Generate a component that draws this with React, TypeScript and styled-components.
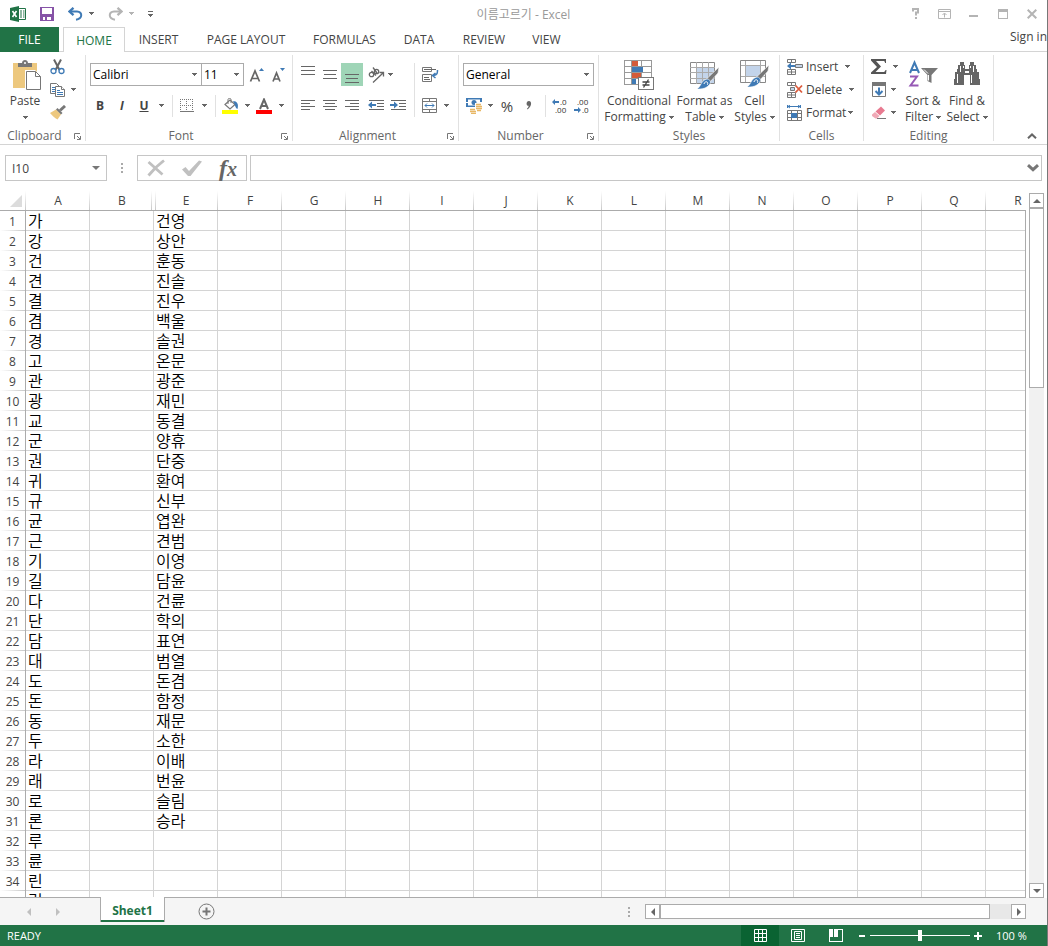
import React from "react";
import styled, { createGlobalStyle, css } from "styled-components";

const Global = createGlobalStyle`
  * { box-sizing: border-box; }
  html, body { margin: 0; }
  body, button, input, select {
    font-family: "Open Sans", "Noto Sans CJK KR", sans-serif;
    font-size: 12px;
    color: #444;
  }
  button { border: 0; padding: 0; background: none; }
  svg { display: block; flex: none; }
`;

const GREEN = "#217346";
const LINE = "#d4d4d4";
const EDGE = "#ababab";

const Window = styled.div`
  height: 100vh;
  display: flex;
  flex-direction: column;
  background: #fff;
  border-right: 1px solid #777;
  overflow: hidden;
`;

/* ---------- title bar ---------- */

const TitleBar = styled.header`
  flex: none;
  height: 27px;
  display: grid;
  grid-template-columns: 1fr auto 1fr;
  align-items: center;
`;

const QuickAccess = styled.div`
  display: flex;
  align-items: center;
  padding-left: 10px;
  gap: 14px;
`;

const QuickButton = styled.button`
  display: flex;
  align-items: center;
  gap: 6px;
`;

const Title = styled.h1`
  margin: 0;
  font-size: 12px;
  font-weight: 400;
  color: #999;
`;

const WindowControls = styled.div`
  display: flex;
  justify-content: flex-end;
  padding-right: 1px;
`;

const WindowButton = styled.button`
  width: 29px;
  height: 24px;
  display: grid;
  place-items: center;
`;

/* ---------- tabs ---------- */

const TabRow = styled.nav`
  flex: none;
  height: 25px;
  display: flex;
  border-bottom: 1px solid ${LINE};
  color: #444;
`;

const Tab = styled.button<{ $width: number; $kind?: "file" | "active" }>`
  width: ${(p) => p.$width}px;
  height: 25px;
  text-align: center;
  white-space: nowrap;
  ${(p) =>
    p.$kind === "file" &&
    css`
      background: ${GREEN};
      color: #fff;
      margin-right: 4px;
    `}
  ${(p) =>
    p.$kind === "active" &&
    css`
      background: #fff;
      color: ${GREEN};
      border: 1px solid ${LINE};
      border-bottom: 0;
    `}
`;

const SignIn = styled.a`
  margin-left: auto;
  line-height: 20px;
  color: #444;
  text-decoration: none;
`;

/* ---------- ribbon ---------- */

const Ribbon = styled.section`
  flex: none;
  height: 93px;
  display: flex;
  padding-top: 3px;
  border-bottom: 1px solid ${LINE};
`;

const Group = styled.div<{ $width: number }>`
  width: ${(p) => p.$width}px;
  height: 86px;
  flex: none;
  display: flex;
  flex-direction: column;
  border-right: 1px solid #e1e1e1;
`;

const GroupBody = styled.div<{ $inset?: number }>`
  flex: none;
  height: 73px;
  display: flex;
  padding-left: ${(p) => p.$inset ?? 0}px;
`;

const GroupFoot = styled.div`
  display: flex;
  height: 13px;
  line-height: 16px;
  color: #666;
`;

const GroupName = styled.span`
  flex: 1;
  text-align: center;
`;

const Launcher = styled.button`
  width: 16px;
  padding: 5px 0 0 5px;
  align-self: flex-start;
`;

const ToolColumn = styled.div<{ $width?: number; $divided?: boolean; $inset?: number }>`
  width: ${(p) => (p.$width ? p.$width + "px" : "auto")};
  padding-left: ${(p) => p.$inset ?? 0}px;
  margin: 8px 0 11px;
  display: flex;
  flex-direction: column;
  gap: 8px;
  ${(p) => p.$divided && `border-right: 1px solid #e1e1e1;`}
`;

const ToolRow = styled.div`
  display: flex;
  align-items: center;
  height: 23px;
`;

const Tool = styled.button<{ $on?: boolean }>`
  width: 22px;
  height: 23px;
  display: grid;
  place-items: center;
  background: ${(p) => (p.$on ? "#9fd5b7" : "transparent")};
`;

const Letter = styled(Tool)<{ $look: "bold" | "italic" | "underline" | "plain" }>`
  font-size: 12px;
  font-weight: ${(p) => (p.$look === "plain" ? 400 : 700)};
  font-style: ${(p) => (p.$look === "italic" ? "italic" : "normal")};
  text-decoration: ${(p) => (p.$look === "underline" ? "underline" : "none")};
`;

const Percent = styled(Letter)`
  font-size: 15px;
`;

const CaretTool = styled.button`
  width: 12px;
  height: 23px;
  display: grid;
  place-items: center;
`;

const DropTool = styled.button<{ $gap?: number; $lead?: number }>`
  height: 23px;
  display: flex;
  align-items: center;
  gap: ${(p) => p.$gap ?? 5}px;
  padding: 0 3px 0 ${(p) => p.$lead ?? 5}px;
`;

const Rule = styled.span`
  width: 1px;
  height: 22px;
  margin: 0 3px 0 5px;
  background: #e1e1e1;
`;

const Pickers = styled.div`
  display: flex;
  padding-left: 1px;
`;

const Picker = styled.label<{ $width: number }>`
  width: ${(p) => p.$width}px;
  height: 23px;
  display: flex;
  align-items: center;
  border: 1px solid ${EDGE};
  & + & { margin-left: -1px; }
  select {
    flex: 1;
    min-width: 0;
    height: 21px;
    appearance: none;
    border: 0;
    padding: 0 2px;
    background: transparent;
    color: #000;
  }
  svg { margin-right: 4px; }
`;

const Big = styled.button<{ $width: number }>`
  width: ${(p) => p.$width}px;
  height: 73px;
  flex: none;
  padding-top: 5px;
  display: flex;
  flex-direction: column;
  align-items: center;
  line-height: 16px;
  white-space: nowrap;
  > svg { margin-bottom: 3px; }
`;

const BigLine = styled.span`
  height: 16px;
  display: flex;
  align-items: center;
  gap: 3px;
`;

const SmallStack = styled.div<{ $width?: number }>`
  width: ${(p) => (p.$width ? p.$width + "px" : "auto")};
  display: flex;
  flex-direction: column;
`;

const Small = styled.button<{ $gap?: number }>`
  height: 23px;
  display: flex;
  align-items: center;
  gap: ${(p) => p.$gap ?? 7}px;
`;

const SmallText = styled.span`
  display: flex;
  align-items: center;
  gap: 3px;
`;

const Collapse = styled.button`
  margin-left: auto;
  align-self: flex-end;
  padding: 0 10px 5px 0;
`;

/* ---------- formula bar ---------- */

const FormulaBar = styled.div`
  flex: none;
  display: flex;
  align-items: center;
  padding: 10px 5px 10px;
`;

const Box = styled.div<{ $width?: number }>`
  ${(p) => (p.$width ? `width: ${p.$width}px;` : "flex: 1;")}
  height: 26px;
  display: flex;
  align-items: center;
  border: 1px solid #c6c6c6;
  input {
    flex: 1;
    min-width: 0;
    border: 0;
    outline: 0;
    padding: 0 6px;
    height: 24px;
  }
`;

const Handle = styled.span`
  width: 30px;
  display: grid;
  place-items: center;
`;

const EntryButtons = styled(Box)`
  justify-content: space-between;
  padding: 0 9px;
  margin-right: 3px;
`;

const BoxButton = styled.button<{ $right: number }>`
  padding-right: ${(p) => p.$right}px;
`;

/* ---------- sheet ---------- */

const SheetArea = styled.main`
  flex: 1;
  min-height: 0;
  display: flex;
`;

const SheetView = styled.div`
  position: relative;
  flex: 1;
  min-width: 0;
  overflow: hidden;
  border-bottom: 1px solid ${EDGE};
  &::after {
    content: "";
    position: absolute;
    top: 19px;
    right: 0;
    bottom: 0;
    width: 1px;
    background: ${EDGE};
  }
`;

const Sheet = styled.table`
  width: 1050px;
  table-layout: fixed;
  border-collapse: separate;
  border-spacing: 0;
`;

const fade = "linear-gradient(#fff, #c8c8c8)";

const ColumnHead = styled.th<{ $edge?: "hiddenAfter" | "hiddenBefore" }>`
  height: 20px;
  padding: 0;
  font-size: 12px;
  line-height: 18px;
  font-weight: 400;
  border-bottom: 1px solid ${EDGE};
  background-repeat: no-repeat;
  background-image: ${(p) => (p.$edge === "hiddenBefore" ? `${fade}, ${fade}` : fade)};
  background-size: 1px 100%;
  background-position: ${(p) =>
    p.$edge === "hiddenAfter"
      ? "right 2px top"
      : p.$edge === "hiddenBefore"
        ? "right top, left 1px top"
        : "right top"};
`;

const Corner = styled(ColumnHead)`
  svg { margin-left: 10px; }
`;

const RowHead = styled.th`
  height: 20px;
  padding: 0;
  font-size: 12px;
  line-height: 19px;
  font-weight: 400;
  text-align: center;
  border-right: 1px solid ${EDGE};
  background: linear-gradient(90deg, #fff, #c8c8c8) left bottom / 100% 1px no-repeat;
`;

const Cell = styled.td`
  height: 20px;
  padding: 0 0 0 2px;
  border-right: 1px solid ${LINE};
  border-bottom: 1px solid ${LINE};
  font-family: "Noto Sans CJK KR", sans-serif;
  font-size: 16px;
  font-weight: 350;
  line-height: 19px;
  color: #000;
  white-space: nowrap;
`;

const VerticalBar = styled.div`
  width: 21px;
  padding: 2px 3px 0;
  display: flex;
  flex-direction: column;
`;

const Arrow = styled.button`
  flex: none;
  width: 15px;
  height: 15px;
  display: grid;
  place-items: center;
  background: #fff;
  border: 1px solid ${EDGE};
`;

const VerticalTrack = styled.div`
  flex: 1;
  background: #f1f1f1;
`;

const VerticalThumb = styled.div`
  height: 180px;
  background: #fff;
  border: 1px solid ${EDGE};
`;

/* ---------- sheet tabs ---------- */

const SheetTabs = styled.div`
  flex: none;
  height: 27px;
  display: flex;
  align-items: center;
  background: #f5f5f5;
`;

const TabArrows = styled.div`
  width: 100px;
  display: flex;
  gap: 21px;
  padding-left: 25px;
`;

const SheetTab = styled.button`
  position: relative;
  align-self: flex-start;
  width: 65px;
  height: 25px;
  margin-top: -1px;
  padding-top: 2px;
  background: #fff;
  border: solid ${EDGE};
  border-width: 0 1px;
  box-shadow: inset 0 -2px ${GREEN};
  color: ${GREEN};
  font-weight: 700;
`;

const AddSheet = styled.button`
  margin-left: 33px;
`;

const SheetScroll = styled.div`
  margin-left: auto;
  width: 398px;
  flex: none;
  display: flex;
  align-items: center;
  margin-right: 21px;
`;

const Grip = styled.span`
  width: 17px;
`;

const HorizontalTrack = styled.div`
  flex: 1;
  background: #e8e8e8;
`;

const HorizontalThumb = styled.div`
  width: 330px;
  height: 15px;
  background: #fff;
  border: 1px solid ${EDGE};
`;

/* ---------- status bar ---------- */

const StatusBar = styled.footer`
  flex: none;
  height: 21px;
  display: flex;
  align-items: center;
  padding-left: 7px;
  background: ${GREEN};
  color: #fff;
  font-size: 11px;
`;

const ViewButtons = styled.div`
  margin-left: auto;
  display: flex;
`;

const ViewButton = styled.button<{ $on?: boolean }>`
  width: 38px;
  height: 21px;
  display: grid;
  place-items: center;
  background: ${(p) => (p.$on ? "#0a6332" : "transparent")};
`;

const ZoomButton = styled.button`
  width: 14px;
  height: 21px;
  display: grid;
  place-items: center;
`;

const ZoomSlider = styled.input`
  width: 100px;
  height: 21px;
  margin: 0 1px;
  appearance: none;
  background: linear-gradient(#fff, #fff) center / 100% 1px no-repeat;
  &::-webkit-slider-thumb {
    appearance: none;
    width: 4px;
    height: 11px;
    background: #fff;
  }
`;

const ZoomValue = styled.span`
  width: 62px;
  padding-left: 11px;
`;

/* ---------- icons ---------- */

const Caret = ({ color = "#666" }: { color?: string }) => (
  <svg width="5" height="3" viewBox="0 0 5 3" fill={color} shapeRendering="crispEdges">
    <path d="M0 0h5v1H0zM1 1h3v1H1zM2 2h1v1H2z" />
  </svg>
);

const Triangle = ({ dir, color = "#666" }: { dir: "up" | "down" | "left" | "right"; color?: string }) => {
  const d = {
    up: "M0 6L4 2L8 6z",
    down: "M0 2L4 6L8 2z",
    left: "M6 0L2 4L6 8z",
    right: "M2 0L6 4L2 8z",
  }[dir];
  return (
    <svg width="8" height="8" viewBox="0 0 8 8" fill={color}>
      <path d={d} />
    </svg>
  );
};

const ExcelLogo = () => (
  <svg width="16" height="16" viewBox="0 0 16 16">
    <path d="M9 2.500h6.500v11H9" fill="#fff" stroke={GREEN} />
    <path d="M10 5h2M13 5h1.500M10 7h2M13 7h1.500M10 9h2M13 9h1.500M10 11h2M13 11h1.500" stroke={GREEN} />
    <path d="M0 2L9 0v16L0 14z" fill={GREEN} />
    <path d="M2.500 5L6.500 11M6.500 5L2.500 11" stroke="#fff" strokeWidth="1.600" />
  </svg>
);

const SaveIcon = () => (
  <svg width="14" height="14" viewBox="0 0 14 14" fill="#8653a7" shapeRendering="crispEdges">
    <path fillRule="evenodd" d="M0 0h14v14H0zM2 1v6h10V1zM3 10v3h2v-3zM7 10v3h4v-3z" />
  </svg>
);

const UndoIcon = ({ color, flip }: { color: string; flip?: boolean }) => (
  <svg width="15" height="14" viewBox="0 0 15 14" fill="none" stroke={color} strokeWidth="2">
    <g transform={flip ? "matrix(-1 0 0 1 15 0)" : undefined}>
      <path d="M5.500 0.800L1.500 4.500L5.500 8.200" strokeWidth="2.300" />
      <path d="M2 4.500H9C12 4.500 13.500 6.500 13.200 8.700C12.900 11 11 12.300 8 12.800" />
    </g>
  </svg>
);

const CustomizeIcon = () => (
  <svg width="5" height="6" viewBox="0 0 5 6" fill="#666" shapeRendering="crispEdges">
    <path d="M0 0h5v1H0zM0 3h5v1H0zM1 4h3v1H1zM2 5h1v1H2z" />
  </svg>
);

const HelpIcon = () => (
  <svg width="8" height="11" viewBox="0 0 8 11" fill="none" stroke="#b4b4b4" strokeWidth="2">
    <path d="M1 3.500V1H6V4.500H4V7.500M3 10h2" />
  </svg>
);

const RibbonOptionsIcon = () => (
  <svg width="13" height="10" viewBox="0 0 13 10" fill="none" stroke="#b4b4b4">
    <path d="M.5 .5h12v9H.5zM.5 2.500h12M6.500 8.500v-4M4.500 6l2-2l2 2" />
  </svg>
);

const MinimizeIcon = () => (
  <svg width="9" height="10" viewBox="0 0 9 10" fill="#b4b4b4">
    <path d="M0 6h9v2H0z" />
  </svg>
);

const MaximizeIcon = () => (
  <svg width="10" height="10" viewBox="0 0 10 10" fill="#b4b4b4" fillRule="evenodd">
    <path d="M0 0h10v10H0zM1 3v6h8V3z" />
  </svg>
);

const CloseIcon = () => (
  <svg width="10" height="10" viewBox="0 0 10 10" stroke="#b4b4b4" strokeWidth="2">
    <path d="M.7 .7l8.600 8.600M9.300 .7L.7 9.300" />
  </svg>
);

const LauncherIcon = () => (
  <svg width="7" height="7" viewBox="0 0 7 7" fill="none" stroke="#777">
    <path d="M.5 6V.5H6M3 3l3 3M6.500 3v3.500H3" />
  </svg>
);

const PasteIcon = () => (
  <svg width="32" height="30" viewBox="-3 0 32 30">
    <path d="M1 3h24v25H1z" fill="#edc87e" />
    <path d="M6 3h4c0-4 6-4 6 0h4v4H6z" fill="#777" />
    <circle cx="13" cy="3" r="1" fill="#fff" />
    <path d="M13 10h10l6 6v14H13z" fill="#fff" />
    <path d="M14.500 11.500h9l5 5v13h-14zM23.500 11.500v5h5" fill="#fff" stroke="#777" />
  </svg>
);

const CutIcon = () => (
  <svg width="16" height="16" viewBox="0 0 16 16" fill="none">
    <path d="M4 0.500L9.500 11M11 0.500L5.500 11" stroke="#666" strokeWidth="2" />
    <circle cx="3.500" cy="12" r="2.500" stroke="#3f7ab5" strokeWidth="1.300" />
    <circle cx="11.500" cy="12" r="2.500" stroke="#3f7ab5" strokeWidth="1.300" />
  </svg>
);

const CopyIcon = () => (
  <svg width="16" height="16" viewBox="0 0 16 16" fill="#fff" stroke="#777">
    <path d="M.5 1.500h6l3 3v7h-9z" />
    <path d="M2 5.500h3M2 7.500h3M2 9.500h3" stroke="#3f7ab5" />
    <path d="M5.500 4.500h6l3 3v7h-9z" />
    <path d="M11.500 4.500v3h3" />
    <path d="M7 8.500h3M7 10.500h6M7 12.500h6" stroke="#3f7ab5" />
  </svg>
);

const BrushIcon = () => (
  <svg width="16" height="15" viewBox="0 0 16 15">
    <path d="M0 8L6 4.500L11 9.500L7.500 14.500C4.500 13 2.500 11 0 8z" fill="#edc87e" />
    <path d="M6 4.500L7.500 3L12.500 8L11 9.500z" fill="#777" />
    <path d="M10 5.500L15 1" stroke="#777" strokeWidth="3" />
  </svg>
);

const GrowFontIcon = ({ small }: { small?: boolean }) => (
  <svg width="16" height="16" viewBox="0 0 16 16">
    <path d={small ? "M2 14.500L5.500 6L9 14.500M3.500 12h4" : "M1.500 14.500L6 4L10.500 14.500M3 11.500h6"} fill="none" stroke="#666" strokeWidth="1.700" />
    <path d={small ? "M9 1h5l-2.500 3z" : "M10 4h5l-2.500-3z"} fill="#3f7ab5" />
  </svg>
);

const BordersIcon = () => (
  <svg width="14" height="14" viewBox="0 0 14 14" stroke="#777" shapeRendering="crispEdges">
    <path d="M0 .5h14M0 6.500h14M.5 0v12M6.500 0v12M12.500 0v12" strokeDasharray="1 1" />
    <path d="M0 12.500h14" />
  </svg>
);

const FillIcon = () => (
  <svg width="17" height="16" viewBox="0 0 17 16">
    <path d="M3 6.500L8 2L13 6.500L8 11z" fill="#fff" stroke="#777" strokeWidth="1.200" />
    <path d="M6 6V1.500C6 0 9 0 9 1.500V5" fill="none" stroke="#777" />
    <path d="M11 3C15 3 17 6 15.500 11C13 10 13.500 7 11 3z" fill="#3f7ab5" />
    <path d="M0 12h16v4H0z" fill="#ff0" />
  </svg>
);

const FontColorIcon = () => (
  <svg width="16" height="16" viewBox="0 0 16 16">
    <path d="M4 11L8 1.500L12 11M5.500 8h5" fill="none" stroke="#666" strokeWidth="2" />
    <path d="M0 12h16v4H0z" fill="#f00" />
  </svg>
);

const LinesIcon = ({ lines, top = 0 }: { lines: [number, number][]; top?: number }) => (
  <svg width="14" height="17" viewBox="0 0 14 17" fill="#666" shapeRendering="crispEdges">
    {lines.map(([x, w], i) => (
      <rect key={i} x={x} y={top + i * (lines.length === 3 ? 4 : 3)} width={w} height="1" />
    ))}
  </svg>
);

const OrientationIcon = () => (
  <svg width="17" height="16" viewBox="0 0 17 16" fill="none" stroke="#666" strokeWidth="1.300">
    <circle cx="3.500" cy="7.500" r="2.200" />
    <path d="M3.500 4L8 8.500" />
    <circle cx="8.500" cy="4.500" r="2.200" />
    <path d="M5 .5L9 6" />
    <path d="M5 15.500L15 6M11.500 5.500h4v4" />
  </svg>
);

const WrapIcon = () => (
  <svg width="17" height="16" viewBox="0 0 17 16" fill="none" stroke="#777">
    <path d="M.5 .5h9v4h-9zM.5 7.500h9v7h-9z" />
    <path d="M2 2.500h12M2 10.500h5M2 12.500h6" stroke="#666" />
    <path d="M15.500 3c0 3 0 5-4 5.500M13.500 6l-3 2.500l3 2.500" stroke="#3f7ab5" strokeWidth="1.500" />
  </svg>
);

const IndentIcon = ({ out }: { out?: boolean }) => (
  <svg width="16" height="11" viewBox="0 0 16 11">
    <path d="M1 .5h15M9 3.500h7M9 6.500h7M1 9.500h15" stroke="#666" shapeRendering="crispEdges" />
    <path d={out ? "M0 5L4 1.500V4h4v2H4v2.500z" : "M8 5L4 1.500V4H0v2h4v2.500z"} fill="#3f7ab5" />
  </svg>
);

const MergeIcon = () => (
  <svg width="15" height="15" viewBox="0 0 15 15" fill="none" stroke="#777">
    <path d="M.5 .5h14v14H.5zM.5 3.500h14M.5 11.500h14M7.500 0v4M7.500 12v3" />
    <path d="M3 7.500h9M5 5.500L3 7.500l2 2M10 5.500l2 2l-2 2" stroke="#3f7ab5" />
  </svg>
);

const CurrencyIcon = () => (
  <svg width="17" height="16" viewBox="0 0 17 16">
    <path d="M0 0h16v9H0z" fill="#3f7ab5" />
    <path d="M2 1.500h12v6H2z" fill="#fff" />
    <circle cx="8" cy="4.500" r="2.500" fill="#3f7ab5" />
    <path d="M0 4h2v1H0zM14 4h2v1h-2z" fill="#fff" />
    <path d="M9 5h7v10h-7zM4 10h7v6H4z" fill="#fff" />
    <path d="M10 6.500h5M10 8.500h6M10 10.500h6M11 12.500h4M4 11.500h5M4 13.500h6M5 15.300h5" stroke="#e8b765" strokeWidth="1.300" />
  </svg>
);

const CommaIcon = () => (
  <svg width="6" height="9" viewBox="0 0 6 9" fill="#666">
    <path d="M3 0C6 0 6 5 1.500 8.500L1 7.500C2.300 6.500 2.700 5.500 2.500 4.800C-.3 4.800 0 0 3 0z" />
  </svg>
);

const DecimalArt = styled.svg`
  font-family: "Open Sans", sans-serif;
  font-size: 8px;
  overflow: visible;
`;

const DecimalIcon = ({ more }: { more?: boolean }) => (
  <DecimalArt width="16" height="16" viewBox="0 0 16 16" fill="#333">
    <text x={more ? 8 : 3} y="7">{more ? ".0" : ".00"}</text>
    <text x={more ? 3 : 8} y="15">{more ? ".00" : ".0"}</text>
    <path
      d={more ? "M0 4L3 1V3h4v2H3v2z" : "M7 12L4 9V11H0v2h4v2z"}
      fill="#3f7ab5"
    />
  </DecimalArt>
);

const ConditionalIcon = () => (
  <svg width="30" height="30" viewBox="0 0 30 30" shapeRendering="crispEdges">
    <path d="M.5 .5h27v24H.5zM7.500 0v25M17.500 0v25M0 6.500h28M0 12.500h28M0 18.500h28" fill="#fff" stroke="#999" />
    <path d="M8 1h6v5H8zM8 13h9v5H8z" fill="#d35b3a" />
    <path d="M8 7h11v5H8zM8 19h4v5H8z" fill="#3f7ab5" />
    <path d="M14.500 17.500h15v12h-15z" fill="#fff" stroke="#777" />
    <g shapeRendering="auto" stroke="#444" strokeWidth="1.300">
      <path d="M18.500 22h7M18.500 25h7M24.500 19.500L19.500 27.500" />
    </g>
  </svg>
);

const Paintbrush = () => (
  <g>
    <path d="M29 5L28 11L20 20L16.500 17z" fill="#777" stroke="#fff" strokeWidth=".6" />
    <path d="M17 17C20 17 21.500 20 19.500 22.500C17 26 12 27.500 7 27C11 25 11 18 17 17z" fill="#3f7ab5" stroke="#fff" strokeWidth=".6" />
    <path d="M14 22c0-2 3-3 3.500-1.500s0 2-.5 2.500" stroke="#fff" fill="none" />
  </g>
);

const FormatTableIcon = () => (
  <svg width="30" height="30" viewBox="0 0 30 30">
    <path d="M.5 2.500h24v21H.5z" fill="#fff" stroke="#888" />
    <path d="M7 8h17v15H7z" fill="#c3d4ea" />
    <path d="M6.500 2v22M12.500 2v22M18.500 2v22M0 7.500h25M0 12.500h25M0 18.500h25" stroke="#aaa" />
    <g transform="translate(0 2)"><Paintbrush /></g>
  </svg>
);

const CellStylesIcon = () => (
  <svg width="30" height="30" viewBox="0 0 30 30">
    <path d="M.5 .5h25v22H.5z" fill="#fff" stroke="#888" />
    <path d="M5.500 1v21M20.500 1v21M1 5.500h24M1 16.500h24" stroke="#aaa" />
    <path d="M6 6h14v10H6z" fill="#c3d4ea" />
    <Paintbrush />
  </svg>
);

const InsertIcon = () => (
  <svg width="16" height="16" viewBox="0 0 16 16" fill="none" stroke="#777">
    <path d="M.5 .5h8v3h-8zM4.500 0v3M.5 10.500h8v5h-8zM4.500 10v6M.5 13h8" />
    <path d="M8.500 5.500h7v3h-7z" fill="#c3d4ea" />
    <path d="M0 7L4 3.500V6h4v2H4v2.500z" fill="#3f7ab5" stroke="none" />
  </svg>
);

const DeleteIcon = () => (
  <svg width="16" height="16" viewBox="0 0 16 16" fill="none" stroke="#777">
    <path d="M.5 .5h8v3h-8zM4.500 0v3M.5 10.500h8v5h-8zM4.500 10v6M.5 13h8" />
    <path d="M3.500 5.500h4v3h-4z" fill="#c3d4ea" />
    <path d="M8.500 3.500l6.500 7M15 3.500l-6.500 7" stroke="#dc5b3c" strokeWidth="1.800" />
  </svg>
);

const FormatIcon = () => (
  <svg width="16" height="16" viewBox="0 0 16 16" fill="none" stroke="#777">
    <path d="M1 1.500h12M3 0L1 1.500L3 3M11 0l2 1.500L11 3M.5 0v3M13.500 0v3" stroke="#3f7ab5" />
    <path d="M.5 5.500h14v10H.5zM4.500 5v11M10.500 5v11M0 8.500h15M0 12.500h15" />
    <path d="M4 8h6v5H4z" fill="#3f7ab5" stroke="none" />
  </svg>
);

const SumIcon = () => (
  <svg width="16" height="16" viewBox="0 0 16 16" fill="#555">
    <path d="M0 0h15v4h-1c0-1.500-.5-2-2-2H5l5 5.500L4.500 13H12c1.500 0 2-.5 2.500-2H15.500L15 15H0v-1.500L6 8L0 1.500z" />
  </svg>
);

const FillDownIcon = () => (
  <svg width="16" height="16" viewBox="0 0 16 16" fill="none">
    <path d="M1.500 1.500h13v13h-13z" fill="#fff" stroke="#777" />
    <path d="M1 0h14v4H1z" fill="#777" />
    <path d="M8 5.500v7M4.500 9L8 12.500L11.500 9" stroke="#3f7ab5" strokeWidth="2" />
  </svg>
);

const EraserIcon = () => (
  <svg width="16" height="14" viewBox="0 0 16 14">
    <path d="M4.500 5.500L10 .5L14 4.500L9 9.500z" fill="#e87a90" />
    <path d="M1 8.500L4 6L8.500 10L6 12.500H4.500L1 10z" fill="#f0a9b6" />
    <path d="M6 12.500h9" stroke="#777" />
  </svg>
);

const SortIcon = () => (
  <svg width="30" height="30" viewBox="0 0 30 30" fill="none" strokeWidth="2">
    <path d="M2 13L6.500 2.500L11 13M3.500 10h6" stroke="#3f7ab5" />
    <path d="M2 16.500h7L2.500 25.500h8" stroke="#9659b5" />
    <path d="M13 8h17l-6.500 7v8l-4-2v-6z" fill="#777" />
    <path d="M20.500 15v5.500M16 9.500l4 4" stroke="#fff" strokeWidth="1" />
  </svg>
);

const FindIcon = () => (
  <svg width="28" height="30" viewBox="0 0 28 30" fill="#666">
    <path d="M7 2h4v3h1v4h4V5h1V2h4v3h2v4h1v3h2v7h1v6h-10V15h-6v10H1v-6h1v-7h2V9h1V5h2z" />
    <path d="M7.500 6v6M20.500 6v6M4.500 14v9M18.500 15v8M10.500 6v2M17.500 6v2" stroke="#fff" />
    <path d="M12 11h4v2h-4z" fill="#fff" />
  </svg>
);

const CancelIcon = () => (
  <svg width="18" height="18" viewBox="0 0 18 18" stroke="#c0c0c0" strokeWidth="2.800" fill="none">
    <path d="M1.500 3L15.500 15.500M17 1.500C11 6 6 11 1.500 16.500" />
  </svg>
);

const EnterIcon = () => (
  <svg width="20" height="18" viewBox="0 0 20 18" fill="#c0c0c0">
    <path d="M0 10.500L3.500 8L7 12L17 1.500L20 2.500L8.500 17H6z" />
  </svg>
);

const FunctionArt = styled.span`
  font-family: "Liberation Serif", serif;
  font-size: 24px;
  line-height: 24px;
  font-style: italic;
  font-weight: 700;
  color: #666;
  small { font-size: 20px; }
`;

const DotsIcon = () => (
  <svg width="2" height="10" viewBox="0 0 2 10" fill="#aaa">
    <path d="M0 0h2v2H0zM0 4h2v2H0zM0 8h2v2H0z" />
  </svg>
);

const ExpandIcon = () => (
  <svg width="12" height="8" viewBox="0 0 12 8" fill="none" stroke="#777" strokeWidth="3">
    <path d="M1 1.200L6 5.700L11 1.200" />
  </svg>
);

const AddIcon = () => (
  <svg width="17" height="17" viewBox="0 0 17 17" fill="none" stroke="#777">
    <circle cx="8.500" cy="8.500" r="7.500" />
    <path d="M8.500 4.500v8M4.500 8.500h8" strokeWidth="2" />
  </svg>
);

/* ---------- data ---------- */

const TABS: [string, number][] = [
  ["INSERT", 67],
  ["PAGE LAYOUT", 108],
  ["FORMULAS", 89],
  ["DATA", 60],
  ["REVIEW", 70],
  ["VIEW", 55],
];

const COLUMNS = "ABEFGHIJKLMNOPQR".split("");

const COL_A =
  "가 강 건 견 결 겸 경 고 관 광 교 군 권 귀 규 균 근 기 길 다 단 담 대 도 돈 동 두 라 래 로 론 루 륜 린 림".split(" ");

const COL_E =
  "건영 상안 훈동 진솔 진우 백울 솔권 온문 광준 재민 동결 양휴 단중 환여 신부 엽완 견범 이영 담윤 건륜 학의 표연 범열 돈겸 함정 재문 소한 이배 번윤 슬림 승라".split(
    " ",
  );

const GroupFooter = ({ name, launcher }: { name: string; launcher?: boolean }) => (
  <GroupFoot>
    <GroupName>{name}</GroupName>
    {launcher && (
      <Launcher aria-label={`${name} settings`}>
        <LauncherIcon />
      </Launcher>
    )}
  </GroupFoot>
);

const BigTool = ({ icon, top, bottom, width }: { icon: React.ReactNode; top: string; bottom?: string; width: number }) => (
  <Big $width={width}>
    {icon}
    <BigLine>{top}</BigLine>
    <BigLine>
      {bottom}
      <Caret />
    </BigLine>
  </Big>
);

export default function App() {
  return (
    <Window>
      <Global />
      <TitleBar>
        <QuickAccess>
          <ExcelLogo />
          <QuickButton aria-label="Save"><SaveIcon /></QuickButton>
          <QuickButton aria-label="Undo"><UndoIcon color="#3f7ab5" /><Caret /></QuickButton>
          <QuickButton aria-label="Redo"><UndoIcon color="#b4b4b4" flip /><Caret color="#b4b4b4" /></QuickButton>
          <QuickButton aria-label="Customize toolbar"><CustomizeIcon /></QuickButton>
        </QuickAccess>
        <Title>이름고르기 - Excel</Title>
        <WindowControls>
          <WindowButton aria-label="Help"><HelpIcon /></WindowButton>
          <WindowButton aria-label="Ribbon display"><RibbonOptionsIcon /></WindowButton>
          <WindowButton aria-label="Minimize"><MinimizeIcon /></WindowButton>
          <WindowButton aria-label="Maximize"><MaximizeIcon /></WindowButton>
          <WindowButton aria-label="Close"><CloseIcon /></WindowButton>
        </WindowControls>
      </TitleBar>

      <TabRow>
        <Tab $width={59} $kind="file">FILE</Tab>
        <Tab $width={62} $kind="active">HOME</Tab>
        {TABS.map(([name, width]) => (
          <Tab key={name} $width={width}>{name}</Tab>
        ))}
        <SignIn href="#">Sign in</SignIn>
      </TabRow>

      <Ribbon>
        <Group $width={86}>
          <GroupBody>
            <BigTool width={50} icon={<PasteIcon />} top="Paste" />
            <SmallStack>
              <Small aria-label="Cut"><CutIcon /></Small>
              <Small aria-label="Copy" $gap={5}><CopyIcon /><Caret /></Small>
              <Small aria-label="Format painter"><BrushIcon /></Small>
            </SmallStack>
          </GroupBody>
          <GroupFooter name="Clipboard" launcher />
        </Group>

        <Group $width={207}>
          <GroupBody $inset={3}>
            <ToolColumn>
              <ToolRow>
                <Pickers>
                  <Picker $width={112}>
                    <select aria-label="Font"><option>Calibri</option></select>
                    <Caret />
                  </Picker>
                  <Picker $width={43}>
                    <select aria-label="Font size"><option>11</option></select>
                    <Caret />
                  </Picker>
                </Pickers>
                <DropTool aria-label="Grow font"><GrowFontIcon /></DropTool>
                <Tool aria-label="Shrink font"><GrowFontIcon small /></Tool>
              </ToolRow>
              <ToolRow>
                <Letter $look="bold">B</Letter>
                <Letter $look="italic">I</Letter>
                <Letter $look="underline">U</Letter>
                <CaretTool aria-label="Underline style"><Caret /></CaretTool>
                <Rule />
                <Tool aria-label="Borders"><BordersIcon /></Tool>
                <CaretTool aria-label="Border style"><Caret /></CaretTool>
                <Rule />
                <Tool aria-label="Fill color"><FillIcon /></Tool>
                <CaretTool aria-label="Pick fill color"><Caret /></CaretTool>
                <Tool aria-label="Font color"><FontColorIcon /></Tool>
                <CaretTool aria-label="Pick font color"><Caret /></CaretTool>
              </ToolRow>
            </ToolColumn>
          </GroupBody>
          <GroupFooter name="Font" launcher />
        </Group>

        <Group $width={166}>
          <GroupBody $inset={4}>
            <ToolColumn $width={118} $divided>
              <ToolRow>
                <Tool aria-label="Top align"><LinesIcon lines={[[0, 14], [0, 14], [0, 14]]} /></Tool>
                <Tool aria-label="Middle align"><LinesIcon top={4} lines={[[0, 14], [1, 12], [0, 14]]} /></Tool>
                <Tool aria-label="Bottom align" $on><LinesIcon top={8} lines={[[0, 14], [1, 12], [0, 14]]} /></Tool>
                <DropTool aria-label="Orientation" $gap={3}><OrientationIcon /><Caret /></DropTool>
              </ToolRow>
              <ToolRow>
                <Tool aria-label="Align left"><LinesIcon top={3} lines={[[0, 14], [0, 9], [0, 14], [0, 9]]} /></Tool>
                <Tool aria-label="Center"><LinesIcon top={3} lines={[[0, 14], [2, 10], [0, 14], [2, 10]]} /></Tool>
                <Tool aria-label="Align right"><LinesIcon top={3} lines={[[0, 14], [5, 9], [0, 14], [5, 9]]} /></Tool>
                <DropTool aria-label="Decrease indent"><IndentIcon out /></DropTool>
                <DropTool aria-label="Increase indent" $lead={3}><IndentIcon /></DropTool>
              </ToolRow>
            </ToolColumn>
            <ToolColumn $inset={2}>
              <ToolRow>
                <DropTool aria-label="Wrap text"><WrapIcon /></DropTool>
              </ToolRow>
              <ToolRow>
                <DropTool aria-label="Merge" $gap={7}><MergeIcon /><Caret /></DropTool>
              </ToolRow>
            </ToolColumn>
          </GroupBody>
          <GroupFooter name="Alignment" launcher />
        </Group>

        <Group $width={140}>
          <GroupBody $inset={4}>
            <ToolColumn>
              <ToolRow>
                <Picker $width={131}>
                  <select aria-label="Number format"><option>General</option></select>
                  <Caret />
                </Picker>
              </ToolRow>
              <ToolRow>
                <DropTool aria-label="Accounting format" $lead={3}><CurrencyIcon /><Caret /></DropTool>
                <Percent $look="plain">%</Percent>
                <Tool aria-label="Comma style"><CommaIcon /></Tool>
                <Rule />
                <Tool aria-label="Increase decimal"><DecimalIcon more /></Tool>
                <Tool aria-label="Decrease decimal"><DecimalIcon /></Tool>
              </ToolRow>
            </ToolColumn>
          </GroupBody>
          <GroupFooter name="Number" launcher />
        </Group>

        <Group $width={181}>
          <GroupBody>
            <BigTool width={80} icon={<ConditionalIcon />} top="Conditional" bottom="Formatting" />
            <BigTool width={51} icon={<FormatTableIcon />} top="Format as" bottom="Table" />
            <BigTool width={49} icon={<CellStylesIcon />} top="Cell" bottom="Styles" />
          </GroupBody>
          <GroupFooter name="Styles" />
        </Group>

        <Group $width={84}>
          <GroupBody $inset={7}>
            <SmallStack>
              <Small><SmallText><InsertIcon />Insert</SmallText><Caret /></Small>
              <Small><SmallText><DeleteIcon />Delete</SmallText><Caret /></Small>
              <Small $gap={2}><SmallText><FormatIcon />Format</SmallText><Caret /></Small>
            </SmallStack>
          </GroupBody>
          <GroupFooter name="Cells" />
        </Group>

        <Group $width={130}>
          <GroupBody $inset={7}>
            <SmallStack $width={30}>
              <Small aria-label="Sum" $gap={6}><SumIcon /><Caret /></Small>
              <Small aria-label="Fill" $gap={4}><FillDownIcon /><Caret /></Small>
              <Small aria-label="Clear" $gap={4}><EraserIcon /><Caret /></Small>
            </SmallStack>
            <BigTool width={44} icon={<SortIcon />} top="Sort &amp;" bottom="Filter" />
            <BigTool width={44} icon={<FindIcon />} top="Find &amp;" bottom="Select" />
          </GroupBody>
          <GroupFooter name="Editing" />
        </Group>

        <Collapse aria-label="Collapse ribbon">
          <svg width="10" height="6" viewBox="0 0 10 6" fill="none" stroke="#666" strokeWidth="2">
            <path d="M1 5.300L5 1.500L9 5.300" />
          </svg>
        </Collapse>
      </Ribbon>

      <FormulaBar>
        <Box $width={102}>
          <input aria-label="Name box" defaultValue="I10" />
          <BoxButton aria-label="Names" $right={6}>
            <svg width="8" height="4" viewBox="0 0 8 4" fill="#777"><path d="M0 0h8L4 4z" /></svg>
          </BoxButton>
        </Box>
        <Handle><DotsIcon /></Handle>
        <EntryButtons $width={110}>
          <button aria-label="Cancel"><CancelIcon /></button>
          <button aria-label="Enter"><EnterIcon /></button>
          <button aria-label="Insert function"><FunctionArt>f<small>x</small></FunctionArt></button>
        </EntryButtons>
        <Box>
          <input aria-label="Formula" />
          <BoxButton aria-label="Expand formula bar" $right={2}><ExpandIcon /></BoxButton>
        </Box>
      </FormulaBar>

      <SheetArea>
        <SheetView>
          <Sheet>
            <colgroup>
              <col width={26} />
              {COLUMNS.map((c) => <col key={c} width={64} />)}
            </colgroup>
            <thead>
              <tr>
                <Corner aria-label="Select all">
                  <svg width="12" height="12" viewBox="0 0 12 12" fill="#dcdcdc"><path d="M12 0v12H0z" /></svg>
                </Corner>
                {COLUMNS.map((c) => (
                  <ColumnHead
                    key={c}
                    scope="col"
                    $edge={c === "B" ? "hiddenAfter" : c === "E" ? "hiddenBefore" : undefined}
                  >
                    {c}
                  </ColumnHead>
                ))}
              </tr>
            </thead>
            <tbody>
              {COL_A.map((name, row) => (
                <tr key={row}>
                  <RowHead scope="row">{row + 1}</RowHead>
                  {COLUMNS.map((c) => (
                    <Cell key={c}>{c === "A" ? name : c === "E" ? COL_E[row] : null}</Cell>
                  ))}
                </tr>
              ))}
            </tbody>
          </Sheet>
        </SheetView>
        <VerticalBar>
          <Arrow aria-label="Scroll up"><Triangle dir="up" /></Arrow>
          <VerticalTrack><VerticalThumb /></VerticalTrack>
          <Arrow aria-label="Scroll down"><Triangle dir="down" /></Arrow>
        </VerticalBar>
      </SheetArea>

      <SheetTabs>
        <TabArrows>
          <button aria-label="Previous sheet"><Triangle dir="left" color="#c0c0c0" /></button>
          <button aria-label="Next sheet"><Triangle dir="right" color="#c0c0c0" /></button>
        </TabArrows>
        <SheetTab>Sheet1</SheetTab>
        <AddSheet aria-label="New sheet"><AddIcon /></AddSheet>
        <SheetScroll>
          <Grip><DotsIcon /></Grip>
          <Arrow aria-label="Scroll left"><Triangle dir="left" /></Arrow>
          <HorizontalTrack><HorizontalThumb /></HorizontalTrack>
          <Arrow aria-label="Scroll right"><Triangle dir="right" /></Arrow>
        </SheetScroll>
      </SheetTabs>

      <StatusBar>
        READY
        <ViewButtons>
          <ViewButton $on aria-label="Normal view">
            <svg width="13" height="13" viewBox="0 0 13 13" fill="none" stroke="#fff">
              <path d="M.5 .5h12v12H.5zM4.500 0v13M8.500 0v13M0 4.500h13M0 8.500h13" />
            </svg>
          </ViewButton>
          <ViewButton aria-label="Page layout view">
            <svg width="14" height="13" viewBox="0 0 14 13" fill="none" stroke="#fff">
              <path d="M.5 .5h13v12H.5zM3.500 2.500h7v8h-7zM5 4.500h4M5 6.500h4M5 8.500h4" />
            </svg>
          </ViewButton>
          <ViewButton aria-label="Page break view">
            <svg width="14" height="13" viewBox="0 0 14 13" fill="#fff">
              <path d="M0 0h4v8H0zM5 0h4v8H5zM0 12h14v1H0zM13 0h1v13h-1zM0 8h1v5H0zM9 0h5v1H9z" />
            </svg>
          </ViewButton>
        </ViewButtons>
        <ZoomButton aria-label="Zoom out">
          <svg width="6" height="2" viewBox="0 0 6 2" fill="#fff"><path d="M0 0h6v2H0z" /></svg>
        </ZoomButton>
        <ZoomSlider type="range" aria-label="Zoom" min={0} max={100} defaultValue={50} />
        <ZoomButton aria-label="Zoom in">
          <svg width="8" height="8" viewBox="0 0 8 8" fill="#fff"><path d="M3 0h2v3h3v2H5v3H3V5H0V3h3z" /></svg>
        </ZoomButton>
        <ZoomValue>100 %</ZoomValue>
      </StatusBar>
    </Window>
  );
}
